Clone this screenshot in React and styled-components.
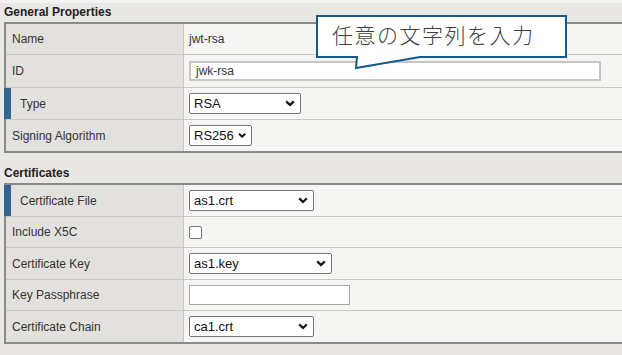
import React from "react";
import styled, { createGlobalStyle } from "styled-components";

const Global = createGlobalStyle`
  html, body { margin: 0; padding: 0; }
  body {
    background: #e9e8e5;
    font-family: "Liberation Sans", Arial, sans-serif;
    font-size: 12px;
    color: #333;
    overflow: hidden;
  }
`;

const Page = styled.div`
  position: relative;
  width: 622px;
  height: 355px;
  border-top: 3px solid #f3f3f1;
  box-sizing: border-box;
  overflow: hidden;
`;

const Section = styled.section`
  margin-top: ${(p) => p.$gap || 0}px;
`;

const Heading = styled.div`
  height: 19px;
  line-height: 18px;
  padding-left: 4px;
  font-weight: bold;
  font-size: 12px;
  color: #222;
`;

const Table = styled.div`
  margin-left: 4px;
  width: 660px;
  border-top: 2px solid #8a8a8a;
  border-bottom: 2px solid #8a8a8a;
  border-left: 2px solid #8a8a8a;
  display: flex;
  flex-direction: column;
`;

const Row = styled.div`
  display: grid;
  grid-template-columns: 178px 1fr;
  height: ${(p) => p.$h || 31}px;
  border-bottom: 1px solid #c9c8c4;
  &:last-child { border-bottom: none; }
`;

const Label = styled.div`
  position: relative;
  background: #e2e1dd;
  border-right: 1px solid #c9c8c4;
  display: flex;
  align-items: center;
  padding-left: ${(p) => (p.$accent ? 14 : 6)}px;
  color: #333;
  ${(p) =>
    p.$accent &&
    `&::before {
      content: "";
      position: absolute;
      left: -2px; top: 0; bottom: 0;
      width: 7px;
      background: #34648f;
    }`}
`;

const Value = styled.div`
  background: #f5f5f3;
  display: flex;
  align-items: center;
  padding-left: 5px;
  color: #333;
`;

const TextInput = styled.div`
  box-sizing: border-box;
  width: ${(p) => p.$w}px;
  height: 20px;
  background: #fff;
  border: ${(p) => (p.$thick ? "2px solid #c6c6c6" : "1px solid #a8a8a8")};
  display: flex;
  align-items: center;
  padding-left: 5px;
  color: #333;
`;

const SelectBox = styled.div`
  box-sizing: border-box;
  width: ${(p) => p.$w}px;
  height: 21px;
  background: #fff;
  border: 1px solid #767676;
  border-radius: 2px;
  display: flex;
  align-items: center;
  justify-content: space-between;
  gap: 4px;
  padding: 0 5px 0 4px;
  font-size: 13px;
  color: #111;
`;

const Check = styled.div`
  box-sizing: border-box;
  width: 13px;
  height: 13px;
  border: 1px solid #767676;
  border-radius: 2px;
  background: #fff;
`;

const Chevron = () => (
  <svg width="10" height="7" viewBox="0 0 10 7">
    <path d="M1.2 1.4 L5 5 L8.8 1.4" fill="none" stroke="#111" strokeWidth="2.2" />
  </svg>
);

const Select = ({ w, children }) => (
  <SelectBox $w={w}>
    <span>{children}</span>
    <Chevron />
  </SelectBox>
);

const Callout = styled.div`
  position: absolute;
  left: 316px;
  top: 9px;
  width: 252px;
  height: 58px;
`;

const CalloutText = styled.div`
  position: absolute;
  left: 16px;
  top: 9px;
  font-family: "Noto Sans CJK JP", "Noto Sans", sans-serif;
  font-weight: 300;
  font-size: 21px;
  line-height: 26px;
  letter-spacing: 1.5px;
  color: #3f3f3f;
`;

export default function App() {
  return (
    <>
      <Global />
      <Page>
        <Section>
          <Heading>General Properties</Heading>
          <Table>
            <Row $h={30}>
              <Label>Name</Label>
              <Value>jwt-rsa</Value>
            </Row>
            <Row $h={32}>
              <Label>ID</Label>
              <Value>
                <TextInput $w={412} $thick>jwk-rsa</TextInput>
              </Value>
            </Row>
            <Row $h={31}>
              <Label $accent>Type</Label>
              <Value>
                <Select w={112}>RSA</Select>
              </Value>
            </Row>
            <Row $h={31}>
              <Label>Signing Algorithm</Label>
              <Value>
                <Select w={63}>RS256</Select>
              </Value>
            </Row>
          </Table>
        </Section>
        <Section $gap={11}>
          <Heading>Certificates</Heading>
          <Table>
            <Row $h={31}>
              <Label $accent>Certificate File</Label>
              <Value>
                <Select w={125}>as1.crt</Select>
              </Value>
            </Row>
            <Row $h={30}>
              <Label>Include X5C</Label>
              <Value>
                <Check />
              </Value>
            </Row>
            <Row $h={31}>
              <Label>Certificate Key</Label>
              <Value>
                <Select w={143}>as1.key</Select>
              </Value>
            </Row>
            <Row $h={30}>
              <Label>Key Passphrase</Label>
              <Value>
                <TextInput $w={161} />
              </Value>
            </Row>
            <Row $h={31}>
              <Label>Certificate Chain</Label>
              <Value>
                <Select w={125}>ca1.crt</Select>
              </Value>
            </Row>
          </Table>
        </Section>
        <Callout>
          <svg width="252" height="58" viewBox="0 0 252 58">
            <path
              d="M1 4 H250 V45 H104 L40 56 L41 45 H1 Z"
              fill="#fff"
              stroke="#145b8c"
              strokeWidth="2"
            />
          </svg>
          <CalloutText>任意の文字列を入力</CalloutText>
        </Callout>
      </Page>
    </>
  );
}
